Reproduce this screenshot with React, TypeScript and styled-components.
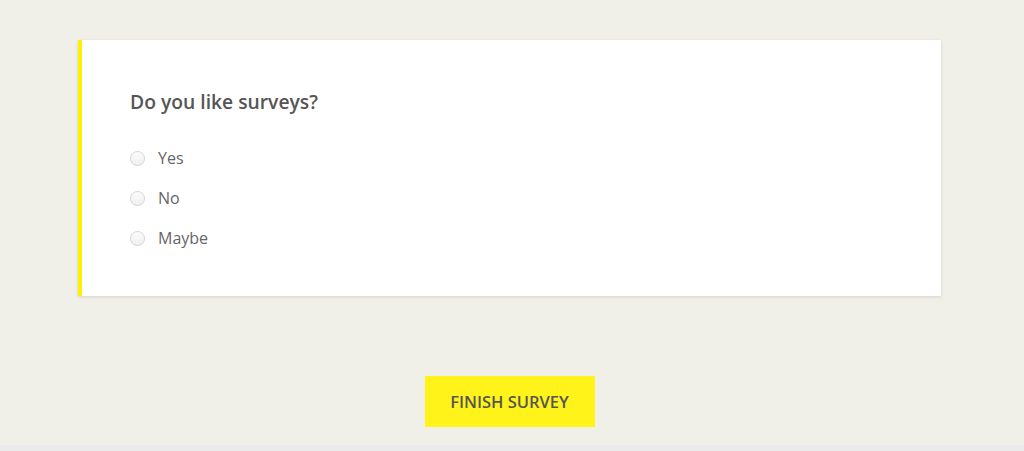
import React from 'react';
import styled, { createGlobalStyle } from 'styled-components';

const GlobalStyle = createGlobalStyle`
  body {
    margin: 0;
    background: #f0efe8;
    font-family: "Open Sans", "Noto Sans", sans-serif;
  }
`;

const Page = styled.div`
  min-height: 445px;
  padding: 40px 83px 0 78px;
  box-sizing: border-box;
  display: flex;
  flex-direction: column;
  align-items: center;
`;

const Card = styled.div`
  align-self: stretch;
  background: #fff;
  border-left: 4px solid #fff200;
  box-shadow: 0 1px 3px rgba(0, 0, 0, 0.12);
  padding: 50px 48px 38px;
  height: 256px;
  box-sizing: border-box;
`;

const Question = styled.h2`
  margin: 0 0 24px;
  font-size: 19.3px;
  line-height: 24px;
  font-weight: 600;
  color: #555;
`;

const Options = styled.div`
  display: flex;
  flex-direction: column;
`;

const Option = styled.label`
  display: flex;
  align-items: center;
  height: 40px;
  gap: 13px;
  font-size: 16px;
  color: #666;
  cursor: pointer;
`;

const Radio = styled.span`
  width: 15px;
  height: 15px;
  border-radius: 50%;
  box-sizing: border-box;
  border: 1px solid #d4d4d4;
  background: linear-gradient(#fbfbfb, #f0f0f0);
`;

const Footer = styled.div`
  display: flex;
  justify-content: center;
  margin-top: 80px;
`;

const FinishButton = styled.button`
  width: 170px;
  height: 51px;
  border: none;
  background: #fff31a;
  color: #555;
  font-family: inherit;
  font-size: 16.5px;
  font-weight: 600;
  cursor: pointer;
`;

const BottomStrip = styled.div`
  height: 6px;
  background: #ebebeb;
`;

const options = ['Yes', 'No', 'Maybe'];

const App = () => (
  <>
    <GlobalStyle />
    <Page>
      <Card>
        <Question>Do you like surveys?</Question>
        <Options>
          {options.map((o) => (
            <Option key={o}>
              <Radio />
              {o}
            </Option>
          ))}
        </Options>
      </Card>
      <Footer>
        <FinishButton>FINISH SURVEY</FinishButton>
      </Footer>
    </Page>
    <BottomStrip />
  </>
);

export default App;
